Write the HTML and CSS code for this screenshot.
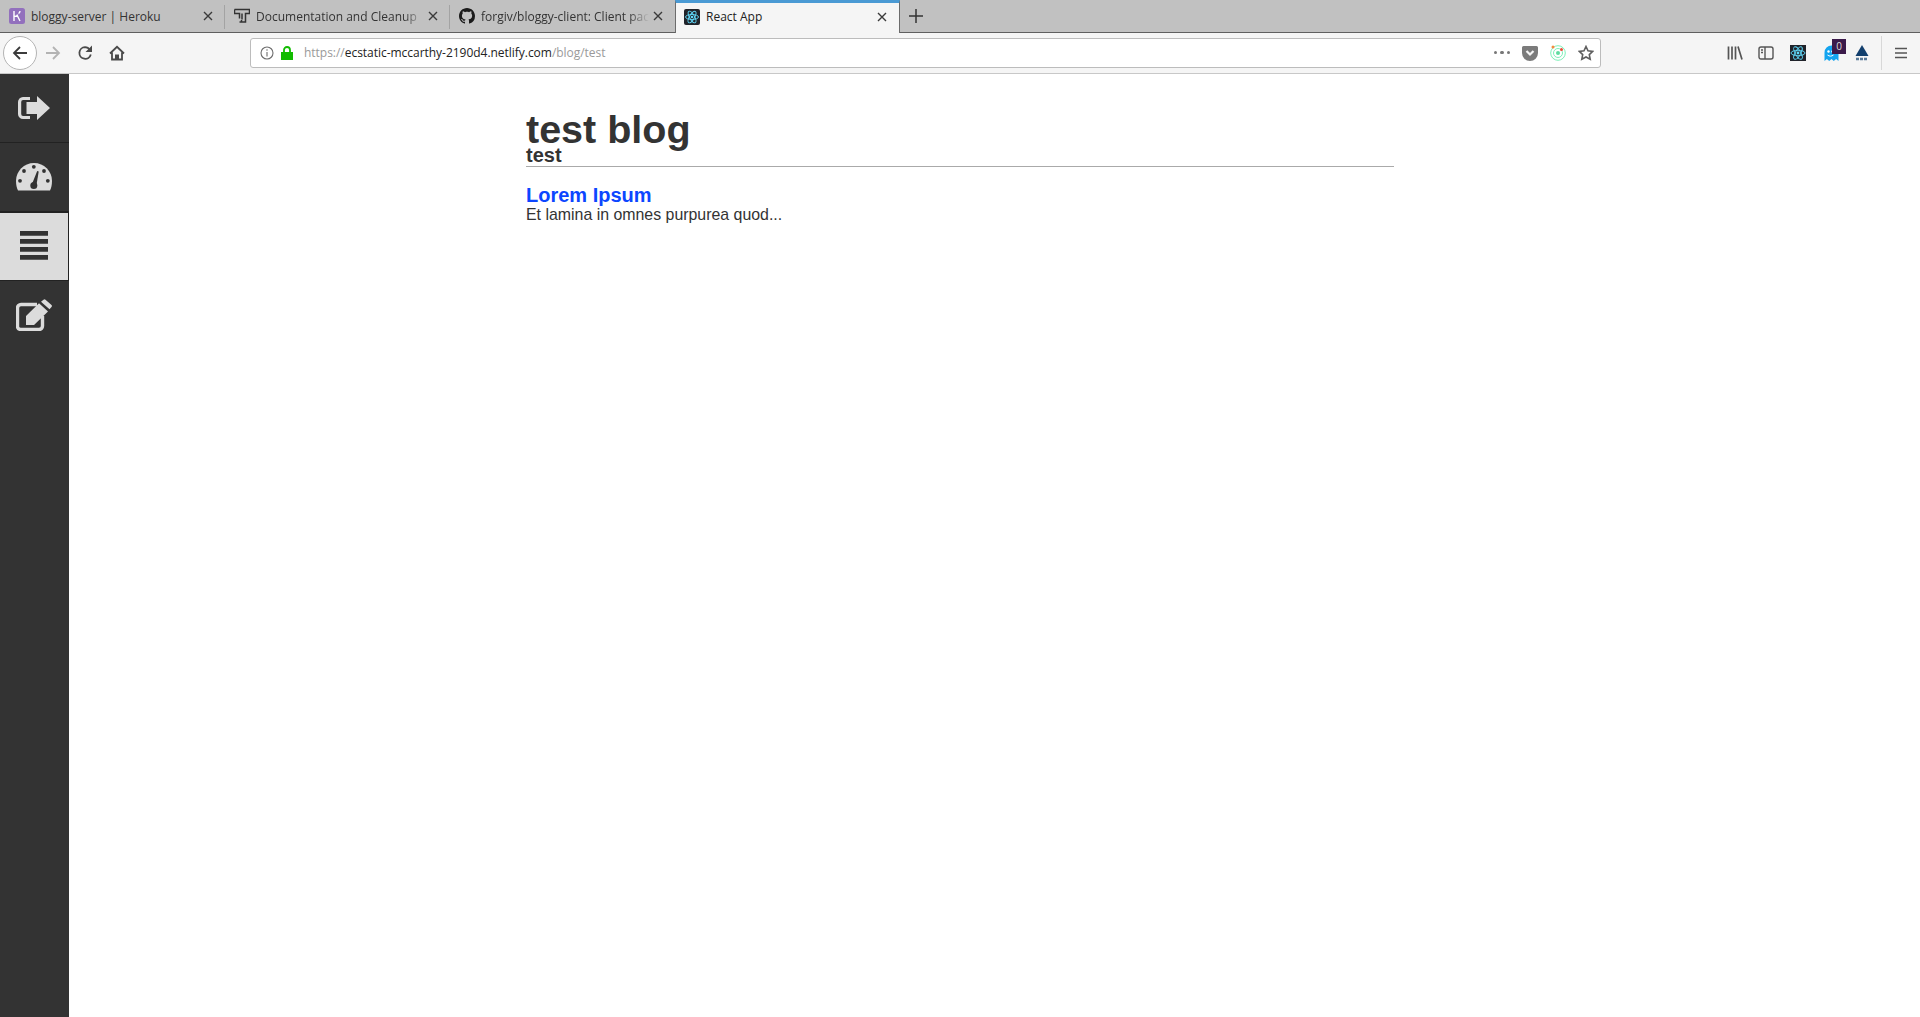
FILE: index.html
```html
<!DOCTYPE html>
<html lang="en">
<head>
<meta charset="utf-8">
<title>React App</title>
<link rel="stylesheet" href="styles.css">
</head>
<body>
<div class="browser">
  <div class="tabbar">
    <div class="tab">
      <svg class="fav" viewBox="0 0 16 16"><rect width="16" height="16" rx="2.500" fill="#9270bd"/><path d="M5 3v10M5 8.500c2 0 3.500-.5 3.500-2M8.500 8l2.500 5M11 3c0 1-.5 2-1.500 2.500" stroke="#fff" stroke-width="1.400" fill="none"/></svg>
      <span class="tab-title">bloggy-server | Heroku</span>
      <svg class="close" viewBox="0 0 10 10"><path d="M1 1l8 8M9 1l-8 8"/></svg>
    </div>
    <div class="tab sep">
      <svg class="fav" viewBox="0 0 16 16"><path d="M.5 1.500h15v4h-4v8.500h-4v-2M5.500 14h2M.5 1.500v4h5v5M8 5.500v6" fill="none" stroke="#333" stroke-width="1.500"/></svg>
      <span class="tab-title fade">Documentation and Cleanup</span>
      <svg class="close" viewBox="0 0 10 10"><path d="M1 1l8 8M9 1l-8 8"/></svg>
    </div>
    <div class="tab sep">
      <svg class="fav" viewBox="0 0 16 16"><path fill="#1b1b1b" d="M8 0C3.580 0 0 3.580 0 8c0 3.540 2.290 6.530 5.470 7.590.4.070.55-.17.55-.38 0-.19-.01-.82-.01-1.490-2.010.37-2.530-.49-2.690-.94-.09-.23-.48-.94-.82-1.130-.28-.15-.68-.52-.01-.53.63-.01 1.080.58 1.230.82.720 1.210 1.870.87 2.330.66.070-.52.280-.87.510-1.070-1.780-.2-3.640-.89-3.640-3.950 0-.87.310-1.590.820-2.150-.08-.2-.36-1.020.08-2.120 0 0 .67-.21 2.200.82.640-.18 1.320-.27 2-.27s1.360.09 2 .27c1.530-1.040 2.200-.82 2.200-.82.440 1.100.160 1.920.080 2.120.510.560.820 1.270.820 2.150 0 3.070-1.870 3.750-3.650 3.950.290.250.540.730.540 1.480 0 1.070-.01 1.930-.01 2.200 0 .210.150.460.550.380A8.010 8.010 0 0016 8c0-4.420-3.580-8-8-8z"/></svg>
      <span class="tab-title fade">forgiv/bloggy-client: Client pac</span>
      <svg class="close" viewBox="0 0 10 10"><path d="M1 1l8 8M9 1l-8 8"/></svg>
    </div>
    <div class="tab active">
      <svg class="fav" viewBox="0 0 16 16"><rect width="16" height="16" rx="2" fill="#20232a"/><g fill="none" stroke="#61dafb" stroke-width=".9"><ellipse cx="8" cy="8" rx="6.500" ry="2.500"/><ellipse cx="8" cy="8" rx="6.500" ry="2.500" transform="rotate(60 8 8)"/><ellipse cx="8" cy="8" rx="6.500" ry="2.500" transform="rotate(120 8 8)"/></g><circle cx="8" cy="8" r="1.300" fill="#61dafb"/></svg>
      <span class="tab-title">React App</span>
      <svg class="close" viewBox="0 0 10 10"><path d="M1 1l8 8M9 1l-8 8"/></svg>
    </div>
    <svg class="newtab" viewBox="0 0 14 14"><path d="M7 0v14M0 7h14"/></svg>
  </div>
  <div class="navbar">
    <div class="nav-left">
      <div class="back"><svg viewBox="0 0 16 16"><path d="M15 8H2M8 2L2 8l6 6"/></svg></div>
      <svg class="nav-ic fwd" viewBox="0 0 16 16"><path d="M1 8h13M8 2l6 6-6 6"/></svg>
      <svg class="nav-ic reload" viewBox="0 0 16 16"><path d="M13.800 9.500A5.800 5.800 0 118 2.200c2.500 0 3.800 1 5.300 3"/><path class="solid" d="M15 .5v6.500H8.500z"/></svg>
      <svg class="nav-ic home" viewBox="0 0 16 16"><path d="M1 8.500L8 1.800l7 6.700M3 7.500V14.500h10V7.500"/><path class="solid" d="M6 9.500h4v5.500H6z"/></svg>
    </div>
    <div class="urlbar">
      <svg class="info" viewBox="0 0 14 14"><circle cx="7" cy="7" r="6"/><path d="M7 6v4.500M7 3.300v1.500"/></svg>
      <svg class="lock" viewBox="0 0 12 14"><path d="M0 6h12v8H0z"/><path class="shackle" d="M3 6.500V4a3 3 0 016 0v2.500"/></svg>
      <div class="url"><span class="dim">https://</span>ecstatic-mccarthy-2190d4.netlify.com<span class="dim">/blog/test</span></div>
      <div class="url-actions">
        <div class="dots"><i></i><i></i><i></i></div>
        <svg class="pocket" viewBox="0 0 16 16"><path fill="#7b7b7b" d="M1.500 1h13A1.500 1.500 0 0116 2.500V8A8 8 0 010 8V2.500A1.500 1.500 0 011.500 1z"/><path d="M4.500 6L8 9.500 11.500 6" fill="none" stroke="#f5f5f5" stroke-width="2.200"/></svg>
        <svg class="radar" viewBox="0 0 16 16"><g fill="none" stroke="#7df0b8"><circle cx="8" cy="8" r="7.300"/><circle cx="8" cy="8" r="4.500"/></g><circle cx="8" cy="8" r="2" fill="#5fdca0"/><circle cx="3" cy="2" r="1.500" fill="#f58a3c"/><circle cx="11.500" cy="4.500" r="1.500" fill="#ee4b3a"/></svg>
        <svg class="star" viewBox="0 0 16 16"><path d="M8 1.500l2 4.300 4.700.6-3.400 3.200.9 4.700L8 12l-4.200 2.300.9-4.700L1.300 6.400 6 5.800z"/></svg>
      </div>
    </div>
    <div class="nav-right">
      <svg class="tool library" viewBox="0 0 16 16"><path d="M1.500 1.500v13M5 1.500v13M8.500 1.500v13M11 1.500l4 13"/></svg>
      <svg class="tool sidebar-ic" viewBox="0 0 16 16"><rect x="1" y="2" width="14" height="12" rx="2"/><path d="M7 2v12M3 5h2M3 7.500h2"/></svg>
      <svg class="ext" viewBox="0 0 16 16"><rect width="16" height="16" fill="#20232a"/><g fill="none" stroke="#61dafb" stroke-width=".9"><ellipse cx="8" cy="8" rx="7" ry="2.700"/><ellipse cx="8" cy="8" rx="7" ry="2.700" transform="rotate(60 8 8)"/><ellipse cx="8" cy="8" rx="7" ry="2.700" transform="rotate(120 8 8)"/></g><circle cx="8" cy="8" r="1.400" fill="#61dafb"/></svg>
      <div class="ghost">
        <svg viewBox="0 0 17 16"><path fill="#13a4ef" d="M1.500 16V7.500a7 7 0 0114 0V16l-2.400-2-2.300 2-2.300-2-2.300 2-2.300-2z"/><circle cx="5.500" cy="6.500" r="1.200" fill="#fff"/><circle cx="9.500" cy="6.500" r="1.200" fill="#fff"/><path d="M4.500 10c2 1.500 4 1.500 6 0" stroke="#fff" fill="none"/></svg>
        <span class="badge">0</span>
      </div>
      <div class="triangle">
        <svg viewBox="0 0 14 16"><path fill="#123f6d" d="M7 0l6.500 11H.5z"/><path d="M1 14h12" stroke="#5a7a99" stroke-width="2.500" stroke-dasharray="3 1"/></svg>
      </div>
      <div class="menu-wrap"><svg class="tool burger" viewBox="0 0 14 12"><path d="M1 1.500h12M1 6h12M1 10.500h12"/></svg></div>
    </div>
  </div>
</div>
<div class="app">
  <nav class="side">
    <a class="side-item">
      <svg viewBox="0 0 32 24" class="ic-signout"><path d="M12 2.500H5A3.500 3.500 0 001.600 6v12A3.500 3.500 0 005 21.500h7" fill="none" stroke="#dcdcdc" stroke-width="3.200"/><path fill="#dcdcdc" d="M8.500 6H19V0l13 12-13 12v-6H8.500z"/></svg>
    </a>
    <a class="side-item">
      <svg viewBox="0 0 36 28" class="ic-gauge"><path fill="#dcdcdc" d="M18 0C8 0 0 8 0 18c0 3.500.7 7 2 9.500h32c1.300-2.500 2-6 2-9.500C36 8 28 0 18 0z"/><g fill="#333"><circle cx="17.800" cy="3.800" r="1.900"/><circle cx="8" cy="8" r="1.900"/><circle cx="28" cy="8" r="1.900"/><circle cx="4" cy="17.800" r="1.900"/><circle cx="31.800" cy="17.800" r="1.900"/><circle cx="17.800" cy="22.500" r="3.500"/><path d="M15.800 21.500L21.200 8l1.500.4L20.300 23z"/></g></svg>
    </a>
    <a class="side-item current">
      <svg viewBox="0 0 28 29" class="ic-bars"><path d="M0 0h28v4.700H0zM0 8h28v4.700H0zM0 16h28v4.700H0zM0 24h28v4.700H0z" fill="#333"/></svg>
    </a>
    <a class="side-item">
      <svg viewBox="0 0 36 32" class="ic-edit"><path d="M21 5.500H5a3.500 3.500 0 00-3.500 3.500v19A3.500 3.500 0 005 30.500h18a3.500 3.500 0 003.500-3.500V17" fill="none" stroke="#dcdcdc" stroke-width="3.400"/><path fill="#dcdcdc" d="M10 26v-9L23 4.200l9 8.300L18 26zM25 2.800L27.500.7a1.500 1.500 0 012 0l6 5.300a1.500 1.500 0 010 2L33.500 10.300z"/></svg>
    </a>
  </nav>
  <main class="main">
    <div class="content">
      <header class="blog-head">
        <h1>test blog</h1>
        <h2>test</h2>
      </header>
      <article class="post">
        <a class="post-title">Lorem Ipsum</a>
        <p>Et lamina in omnes purpurea quod...</p>
      </article>
    </div>
  </main>
</div>
</body>
</html>
```
FILE: styles.css
```css
* { box-sizing: border-box; }
html, body { margin: 0; padding: 0; height: 100%; }
body { width: 1920px; height: 1017px; overflow: hidden; display: flex; flex-direction: column; background: #fff; font-family: "Liberation Sans", Arial, sans-serif; }

.browser { flex: none; font-family: "Open Sans", "Noto Sans", sans-serif; }
.tabbar { height: 33px; background: #c1c1c1; border-bottom: 1px solid #5f5f5f; display: flex; align-items: stretch; position: relative; }
.tab { width: 225px; height: 32px; display: flex; align-items: center; padding-left: 9px; padding-right: 9px; position: relative; color: #333; font-size: 12px; }
.tab.sep::before { content: ""; width: 1px; height: 24px; background: #a3a3a3; position: absolute; left: -1px; top: 5px; }
.tab.active { width: 225px; height: 33px; margin-bottom: -1px; background: #f5f5f5; border-top: 3px solid #4a9ad4; border-left: 1px solid #6c6c6c; border-right: 1px solid #6c6c6c; padding-left: 8px; padding-bottom: 3px; z-index: 1; color: #222; }
.fav { width: 16px; height: 16px; flex: none; margin-right: 6px; }
.tab-title { flex: 1; white-space: nowrap; overflow: hidden; }
.fade { -webkit-mask-image: linear-gradient(to right, #000 88%, transparent 100%); mask-image: linear-gradient(to right, #000 88%, transparent 100%); }
.close { width: 10px; height: 10px; flex: none; margin-left: 4px; margin-right: 3px; }
.close path { stroke: #3a3a3a; stroke-width: 1.400; fill: none; }
.newtab { width: 14px; height: 14px; margin: 9px 0 0 9px; }
.newtab path { stroke: #333; stroke-width: 1.500; fill: none; }

.navbar { height: 41px; background: #f5f5f5; border-bottom: 1px solid #c8c8c8; display: flex; align-items: center; }
.nav-left { width: 250px; display: flex; align-items: center; padding-left: 3px; flex: none; }
.back { width: 34px; height: 34px; border: 1px solid #b4b4b4; border-radius: 50%; background: #fff; display: flex; align-items: center; justify-content: center; }
.back svg { width: 16px; height: 16px; fill: none; stroke: #3b3b3b; stroke-width: 1.800; }
.nav-ic { width: 16px; height: 16px; flex: none; fill: none; stroke: #4a4a4a; stroke-width: 1.800; }
.nav-ic .solid { fill: #4a4a4a; stroke: none; }
.fwd { margin-left: 8px; stroke: #b3b3b3; }
.reload { margin-left: 16px; }
.home { margin-left: 16px; }

.urlbar { width: 1351px; height: 30px; background: #fff; border: 1px solid #bcbcbc; border-radius: 3px; display: flex; align-items: center; flex: none; margin-top: -1px; }
.info { width: 14px; height: 14px; margin-left: 9px; fill: none; stroke: #6d6d6d; stroke-width: 1.100; flex: none; }
.lock { width: 12px; height: 14px; margin-left: 7px; flex: none; }
.lock path { fill: #12bc00; }
.lock .shackle { fill: none; stroke: #12bc00; stroke-width: 1.800; }
.url { margin-left: 11px; font-size: 12px; color: #222; white-space: nowrap; letter-spacing: -.03px; }
.dim { color: #9a9a9a; }
.url-actions { margin-left: auto; display: flex; align-items: center; padding-right: 6px; }
.dots { display: flex; gap: 3px; }
.dots i { width: 3.500px; height: 3.500px; border-radius: 50%; background: #777; display: block; }
.pocket { width: 16px; height: 16px; margin-left: 12px; }
.radar { width: 16px; height: 16px; margin-left: 12px; }
.star { width: 16px; height: 16px; margin-left: 12px; fill: none; stroke: #5f5f5f; stroke-width: 1.600; }

.nav-right { flex: 1; display: flex; align-items: center; padding-left: 126px; }
.tool { flex: none; fill: none; stroke: #555; }
.library { width: 16px; height: 16px; stroke-width: 1.700; }
.sidebar-ic { width: 16px; height: 16px; margin-left: 15px; stroke-width: 1.400; }
.ext { width: 16px; height: 16px; margin-left: 16px; flex: none; }
.ghost { width: 24px; height: 22px; margin-left: 17px; margin-bottom: 6px; display: flex; align-items: flex-end; position: relative; flex: none; }
.ghost svg { width: 17px; height: 16px; display: block; }
.badge { position: absolute; left: 9px; top: 0; width: 14px; height: 15px; background: #3b1a4a; color: #ddd; font-size: 10px; line-height: 14px; text-align: center; }
.triangle { margin-left: 8px; width: 14px; height: 16px; flex: none; }
.triangle svg { width: 14px; height: 16px; display: block; }
.menu-wrap { margin-left: 12px; height: 34px; border-left: 1px solid #d8d8d8; padding-left: 12px; display: flex; align-items: center; }
.burger { width: 14px; height: 12px; stroke-width: 1.700; }

.app { flex: 1; display: flex; min-height: 0; }
.side { width: 69px; flex: none; background: #333; display: flex; flex-direction: column; }
.side-item { height: 69px; display: flex; align-items: center; justify-content: center; border-bottom: 1px solid #222; padding-right: 1px; }
.side-item:nth-child(4) { border-bottom: 0; padding-bottom: 2px; }
.side-item.current { background: #dcdcdc; border-right: 1px solid #222; border-top: 1px solid #222; padding-bottom: 2px; padding-right: 0; }
.ic-signout { width: 32px; height: 24px; }
.ic-gauge { width: 36px; height: 28px; }
.ic-bars { width: 28px; height: 29px; }
.ic-edit { width: 36px; height: 32px; }

.main { flex: 1; min-width: 0; }
.content { width: 868px; margin-left: 457px; padding-top: 40px; color: #333; }
.blog-head { border-bottom: 1px solid #aaa; height: 53px; }
h1 { margin: 0; font-size: 39.500px; line-height: 31px; font-weight: 700; color: #333; }
h2 { margin: 0; font-size: 20px; line-height: 20px; font-weight: 700; color: #333; }
.post { margin-top: 18px; }
.post-title { display: block; font-size: 20px; line-height: 20px; font-weight: 700; color: #0c46ff; }
.post p { margin: 0; font-size: 15.900px; line-height: 20px; color: #333; }
```
